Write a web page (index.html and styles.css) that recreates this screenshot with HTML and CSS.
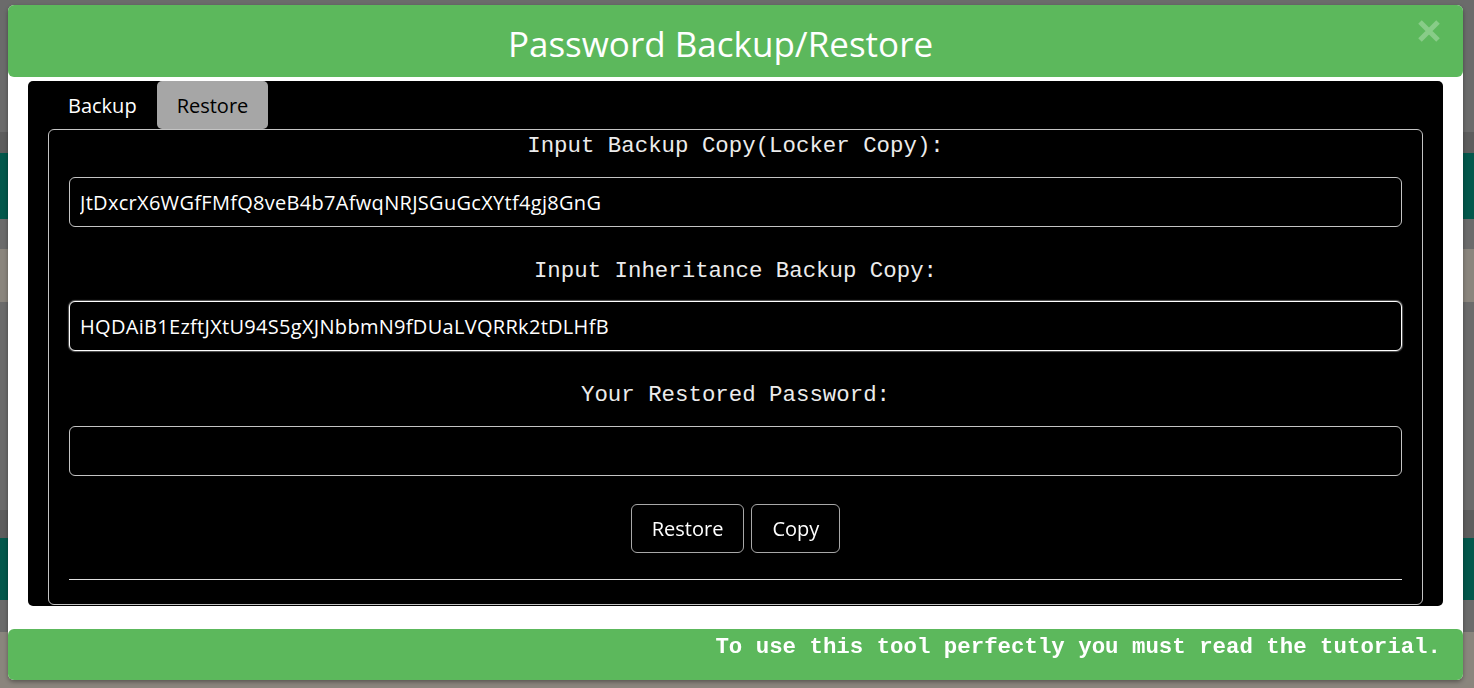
FILE: index.html
```html
<!DOCTYPE html>
<html>
<head>
    <meta charset="UTF-8">
    <title>Password Backup/Restore</title>
    <link rel="stylesheet" href="styles.css">
</head>
<body>
    <!-- page underneath the dialog -->
    <div class="page">
        <div class="band band-a"></div>
        <div class="band band-dark"></div>
        <div class="band band-teal"></div>
        <div class="band band-gap"></div>
        <div class="band band-sand"></div>
        <div class="band band-long"></div>
        <div class="band band-dark2"></div>
        <div class="band band-teal2"></div>
        <div class="band band-gap2"></div>
        <div class="band band-sand2"></div>
    </div>

    <div class="overlay">
        <div class="modal">
            <header class="modal-header">
                <h1>Password Backup/Restore</h1>
                <span class="close" title="Close">
                    <svg width="24" height="22" viewBox="0 0 24 22">
                        <path d="M3 2 L21 20 M21 2 L3 20" stroke="currentColor" stroke-width="5" fill="none"/>
                    </svg>
                </span>
            </header>

            <div class="modal-body">
                <div class="tabs">
                    <button type="button" class="tab">Backup</button>
                    <button type="button" class="tab tab-active">Restore</button>
                </div>

                <div class="tab-panel">
                    <label class="field-label" for="lockerCopy">Input Backup Copy(Locker Copy):</label>
                    <input type="text" class="field" id="lockerCopy" value="JtDxcrX6WGfFMfQ8veB4b7AfwqNRJSGuGcXYtf4gj8GnG">

                    <label class="field-label" for="inheritCopy">Input Inheritance Backup Copy:</label>
                    <input type="text" class="field field-focus" id="inheritCopy" value="HQDAiB1EzftJXtU94S5gXJNbbmN9fDUaLVQRRk2tDLHfB">

                    <label class="field-label" for="restored">Your Restored Password:</label>
                    <input type="text" class="field" id="restored" value="">

                    <div class="actions">
                        <button type="button" class="btn">Restore</button>
                        <button type="button" class="btn">Copy</button>
                    </div>
                    <hr class="divider">
                </div>
            </div>

            <footer class="modal-footer">
                <p>To use this tool perfectly you must read the tutorial.</p>
            </footer>
        </div>
    </div>
</body>
</html>
```

FILE: styles.css
```css
body {
    margin: 0;
    background-color: #6b6b6b;
    font-family: "Open Sans", "Noto Sans", sans-serif;
    overflow: hidden;
}
.page {
    display: flex;
    flex-direction: column;
}
.band { background-color: #6b6b6b; }
.band-a { height: 132px; }
.band-dark { height: 21px; background-color: #5d5d5d; }
.band-teal { height: 66px; background-color: #03584c; }
.band-gap { height: 30px; }
.band-sand { height: 53px; background-color: #8a857d; }
.band-long { height: 208px; }
.band-dark2 { height: 28px; background-color: #5d5d5d; }
.band-teal2 { height: 62px; background-color: #03584c; }
.band-gap2 { height: 32px; }
.band-sand2 { height: 56px; background-color: #8a857d; }

.overlay {
    position: fixed;
    top: 0;
    left: 0;
    right: 0;
    bottom: 0;
    padding: 5px 0 0 8px;
}
.modal {
    width: 1455px;
    background-color: #fff;
    border-radius: 6px;
    box-shadow: 0 2px 4px rgba(0, 0, 0, 0.35);
}
.modal-header {
    position: relative;
    height: 72px;
    padding-right: 30px;
    background-color: #5cb85c;
    border-radius: 6px;
    color: #fff;
    text-align: center;
}
.modal-header h1 {
    margin: 0;
    font-weight: normal;
    font-size: 35px;
    line-height: 78px;
}
.close {
    position: absolute;
    top: 15px;
    right: 22px;
    color: #88cc88;
    cursor: pointer;
    line-height: 0;
}
.modal-body {
    margin: 4px 20px 0 20px;
    padding: 0 20px 1px 20px;
    background-color: #000;
    border-radius: 5px;
}
.tabs {
    display: flex;
}
.tab {
    height: 48px;
    padding: 0 20px;
    border: none;
    border-radius: 5px;
    background-color: transparent;
    color: #fff;
    font-family: inherit;
    font-size: 20px;
    cursor: pointer;
}
.tab-active {
    background-color: #a6a6a6;
    color: #000;
}
.tab-panel {
    display: flex;
    flex-direction: column;
    padding: 1px 20px 0 20px;
    border: 1px solid #c4c4c4;
    border-radius: 6px;
}
.field-label {
    display: block;
    margin-top: 29px;
    font-family: "Liberation Mono", "Courier New", monospace;
    font-size: 22.4px;
    line-height: 30px;
    color: #ececec;
    text-align: center;
}
.field-label:first-child {
    margin-top: 0;
}
.field {
    height: 50px;
    margin-top: 15px;
    padding: 0 10px;
    box-sizing: border-box;
    background-color: #000;
    color: #fff;
    border: 1px solid #c4c4c4;
    border-radius: 6px;
    font-family: "Open Sans", "Noto Sans", sans-serif;
    font-size: 20px;
    letter-spacing: 0.3px;
    outline: none;
}
.field:first-of-type {
    margin-top: 16px;
}
.field:nth-of-type(3) {
    margin-top: 16px;
}
.field-focus {
    border-color: #fff;
    box-shadow: 0 0 1px 1px rgba(255, 255, 255, 0.35);
}
.actions {
    display: flex;
    justify-content: center;
    gap: 7px;
    margin-top: 28px;
}
.btn {
    height: 49px;
    padding: 0 20px;
    background-color: #000;
    color: #fff;
    border: 1px solid #a8a8a8;
    border-radius: 6px;
    font-family: inherit;
    font-size: 20px;
    cursor: pointer;
}
.divider {
    width: 100%;
    margin: 26px 0 24px 0;
    border: none;
    border-top: 1px solid #e0e0e0;
}
.modal-footer {
    height: 51px;
    margin-top: 23px;
    padding: 5px 22px 0 0;
    box-sizing: border-box;
    background-color: #5cb85c;
    border-radius: 6px;
    text-align: right;
}
.modal-footer p {
    margin: 0;
    color: #fff;
    font-family: "Liberation Mono", "Courier New", monospace;
    font-weight: bold;
    font-size: 22.4px;
    line-height: 26px;
}
```
